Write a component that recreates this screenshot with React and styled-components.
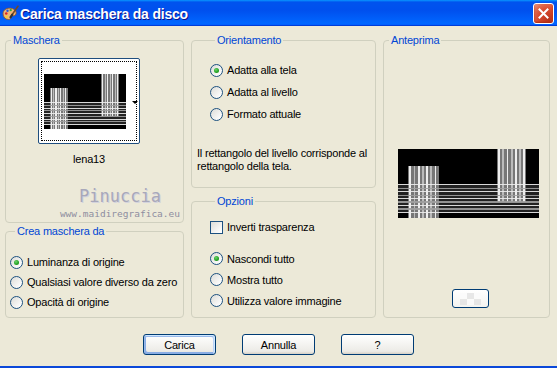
import React from 'react'
import styled, { createGlobalStyle, css } from 'styled-components'

const GlobalStyle = createGlobalStyle`
  html, body {
    margin: 0;
    padding: 0;
    background: #ECE9D8;
  }
  body {
    font-family: "Liberation Sans", Arial, sans-serif;
    font-size: 11px;
    letter-spacing: -0.2px;
    color: #000;
  }
`

const Window = styled.div`
  width: 557px;
  height: 368px;
  box-sizing: border-box;
  display: flex;
  flex-direction: column;
  background: #ECE9D8;
  border-bottom: 2px solid #0B48D9;
  overflow: hidden;
`

const TitleBar = styled.div`
  height: 26px;
  flex: none;
  display: flex;
  align-items: center;
  padding: 0 2px 0 2px;
  gap: 1px;
  background: linear-gradient(180deg, #0997ff 0%, #0053ee 8%, #0050ee 40%, #0066ff 88%, #0066ff 93%, #005bff 95%, #003dd7 96%, #003dd7 100%);
`

const Title = styled.span`
  flex: 1;
  color: #fff;
  font-weight: bold;
  font-size: 14px;
  letter-spacing: -0.2px;
  text-shadow: 1px 1px #0f1089;
  padding-top: 1px;
`

const CloseButton = styled.div`
  width: 19px;
  height: 19px;
  margin-right: 1px;
  border: 1px solid #fff;
  border-radius: 3px;
  display: flex;
  align-items: center;
  justify-content: center;
  background: radial-gradient(circle at 80% 85%, #b8321a 0%, #d84a2e 50%, #e06a4e 75%, #eb9c88 100%);
  box-shadow: inset 0 -1px 2px #a82a12;
`

const Body = styled.div`
  flex: 1;
  display: flex;
  flex-direction: column;
  padding: 8px 0 0 5px;
`

const Columns = styled.div`
  display: flex;
  gap: 7px;
  height: 284px;
`

const Column = styled.div`
  width: ${p => p.$w}px;
  display: flex;
  flex-direction: column;
  gap: ${p => p.$gap || 0}px;
`

const Group = styled.fieldset`
  margin: 0;
  padding: 0;
  min-width: 0;
  box-sizing: border-box;
  border: 1px solid #D0D0BF;
  border-radius: 4px;
  display: flex;
  flex-direction: column;
  ${p => p.$h ? css`height: ${p.$h}px; flex: none;` : css`flex: 1;`}
  ${p => p.$pad && css`padding: ${p.$pad};`}
`

const Legend = styled.legend`
  color: #0046D5;
  padding: 0 2px;
  margin-left: 5px;
  line-height: 13px;
`

const Option = styled.label`
  display: flex;
  align-items: center;
  gap: 4px;
  height: ${p => p.$h || 20}px;
  white-space: nowrap;
`

const Radio = styled.span`
  width: 11px;
  height: 11px;
  flex: none;
  border: 1px solid #1C5180;
  border-radius: 50%;
  background: linear-gradient(135deg, #dcdcd7 0%, #fff 90%);
  display: flex;
  align-items: center;
  justify-content: center;

  &::after {
    content: "";
    display: ${p => (p.$on ? 'block' : 'none')};
    width: 5px;
    height: 5px;
    border-radius: 50%;
    background: radial-gradient(circle at 40% 35%, #6bd36b 0%, #21a121 60%, #1a801a 100%);
  }
`

const Check = styled.span`
  width: 11px;
  height: 11px;
  flex: none;
  border: 1px solid #1C5180;
  background: linear-gradient(135deg, #dcdcd7 0%, #fff 90%);
`

const Note = styled.p`
  margin: 22px 0 0 -13px;
  line-height: 13px;
`

const ThumbButton = styled.div`
  width: 102px;
  height: 86px;
  box-sizing: border-box;
  margin: 11px 0 0 32px;
  border: 1px solid #1F4E7E;
  border-radius: 2px;
  background: #fff;
  display: flex;
  align-items: center;
  padding-left: 5px;
  outline: 1px dotted #000;
  outline-offset: -4px;
`

const Arrow = styled.span`
  width: 0;
  height: 0;
  margin: 2px 0 0 6px;
  border-left: 3px solid transparent;
  border-right: 3px solid transparent;
  border-top: 3px solid #000;
`

const ThumbName = styled.div`
  width: 102px;
  margin: 9px 0 0 32px;
  text-align: center;
  line-height: 13px;
`

const Watermark = styled.div`
  margin-top: 21px;
  padding-right: 3px;
  display: flex;
  flex-direction: column;
  align-items: flex-end;
  font-family: "DejaVu Sans Mono", monospace;
  letter-spacing: 0;
`

const Signature = styled.span`
  font-size: 17px;
  line-height: 18px;
  margin-right: 19px;
  color: #A8A8BA;
  text-shadow: 1px 1px 0 #d4d4de;
`

const Site = styled.span`
  font-size: 9.5px;
  line-height: 12px;
  margin-top: 3px;
  color: #8E8EA0;
`

const Preview = styled.div`
  margin: 102px 0 0 14px;
  line-height: 0;
`

const SwatchButton = styled.div`
  width: 37px;
  height: 19px;
  box-sizing: border-box;
  margin: 71px 0 0 68px;
  border: 1px solid #003C74;
  border-radius: 3px;
  background: linear-gradient(180deg, #fff 0%, #f4f4f0 100%);
  display: flex;
  align-items: center;
  justify-content: center;

  &::after {
    content: "";
    width: 21px;
    height: 12px;
    background: repeating-conic-gradient(#e2e2e2 0 25%, #fbfbfb 0 50%) 0 0 / 14px 12px;
    opacity: 0.8;
  }
`

const ButtonRow = styled.div`
  display: flex;
  justify-content: center;
  gap: 26px;
  margin: 16px 5px 0 0;
`

const Button = styled.button`
  width: 73px;
  height: 21px;
  padding: 0;
  font: inherit;
  letter-spacing: inherit;
  color: #000;
  border: 1px solid #003C74;
  border-radius: 3px;
  background: linear-gradient(180deg, #fff 0%, #ecebe6 86%, #d6d0c5 100%);
  ${p => p.$default && css`
    box-shadow: inset -1px 1px #cee7ff, inset 1px 2px #98b8ea, inset -2px 2px #bcd4f6, inset 1px -1px #89ade4, inset 2px -2px #89ade4;
  `}
`

function AppIcon() {
  return (
    <svg width="17" height="17" viewBox="0 0 16 16">
      <path d="M7 3C3.6 3 1 5.2 1 8.3c0 3 2.3 5.4 5.4 5.4 1.4 0 1.7-.9 1.2-1.8-.5-.9.1-1.8 1.3-1.8h1.6c1.8 0 2.8-1.1 2.8-2.7C13.3 5 10.6 3 7 3z" fill="#EDB677" stroke="#9A5A22" strokeWidth=".8" />
      <circle cx="4" cy="8" r="1.2" fill="#D8262A" />
      <circle cx="5.2" cy="5.4" r="1.1" fill="#2B55D6" />
      <circle cx="8.2" cy="4.8" r="1.1" fill="#2CA53A" />
      <circle cx="4.4" cy="11" r="1.1" fill="#F2D12B" />
      <path d="M15 1.2 9.4 9.3" stroke="#6E4A2A" strokeWidth="1.6" strokeLinecap="round" />
      <path d="M9.6 9 8.2 11.6" stroke="#333" strokeWidth="2" strokeLinecap="round" />
    </svg>
  )
}

function CloseIcon() {
  return (
    <svg width="11" height="11" viewBox="0 0 11 11">
      <path d="M1.5 1.5 9.5 9.5M9.5 1.5 1.5 9.5" stroke="#fff" strokeWidth="2" strokeLinecap="square" />
    </svg>
  )
}

const hLines = [51, 56, 61, 66, 71, 76, 81, 86, 91]
const vLeft = [8, 11, 14, 17, 20, 23, 26]
const vRight = [71, 74, 77, 80, 83, 86, 89]

function MaskArt({ width, height }) {
  return (
    <svg width={width} height={height} viewBox="0 0 100 100" preserveAspectRatio="none" shapeRendering="crispEdges">
      <rect width="100" height="100" fill="#000" />
      <rect x="0" y="50" width="100" height="43" fill="#222" />
      <rect x="7" y="25" width="22" height="75" fill="#777" />
      <rect x="70" y="0" width="21" height="77" fill="#777" />
      {vLeft.map((x, i) => (
        <rect key={'l' + x} x={x} y="25" width="1.3" height="75" fill={i % 2 ? '#bbb' : '#eee'} />
      ))}
      {vRight.map((x, i) => (
        <rect key={'r' + x} x={x} y="0" width="1.3" height="77" fill={i % 2 ? '#bbb' : '#eee'} />
      ))}
      {hLines.map((y, i) => (
        <rect key={'h' + y} x="0" y={y} width="100" height="1.8" fill={i % 2 ? '#a0a0a0' : '#ececec'} opacity="0.9" />
      ))}
    </svg>
  )
}

export default function App() {
  return (
    <Window>
      <GlobalStyle />
      <TitleBar>
        <AppIcon />
        <Title>Carica maschera da disco</Title>
        <CloseButton><CloseIcon /></CloseButton>
      </TitleBar>

      <Body>
        <Columns>
          <Column $w={179} $gap={2}>
            <Group $h={189}>
              <Legend>Maschera</Legend>
              <ThumbButton>
                <MaskArt width={82} height={55} />
                <Arrow />
              </ThumbButton>
              <ThumbName>lena13</ThumbName>
              <Watermark>
                <Signature>Pinuccia</Signature>
                <Site>www.maidiregrafica.eu</Site>
              </Watermark>
            </Group>
            <Group $pad="14px 0 0 4px">
              <Legend>Crea maschera da</Legend>
              <Option><Radio $on />Luminanza di origine</Option>
              <Option><Radio />Qualsiasi valore diverso da zero</Option>
              <Option><Radio />Opacità di origine</Option>
            </Group>
          </Column>

          <Column $w={185} $gap={7}>
            <Group $h={154} $pad="12px 0 0 18px">
              <Legend>Orientamento</Legend>
              <Option $h={22}><Radio $on />Adatta alla tela</Option>
              <Option $h={22}><Radio />Adatta al livello</Option>
              <Option $h={22}><Radio />Formato attuale</Option>
              <Note>
                Il rettangolo del livello corrisponde al<br />rettangolo della tela.
              </Note>
            </Group>
            <Group $pad="9px 0 0 18px">
              <Legend>Opzioni</Legend>
              <Option><Check />Inverti trasparenza</Option>
              <Option $h={21} style={{ marginTop: 11 }}><Radio $on />Nascondi tutto</Option>
              <Option $h={21}><Radio />Mostra tutto</Option>
              <Option $h={21}><Radio />Utilizza valore immagine</Option>
            </Group>
          </Column>

          <Column $w={167}>
            <Group>
              <Legend>Anteprima</Legend>
              <Preview>
                <MaskArt width={141} height={69} />
              </Preview>
              <SwatchButton />
            </Group>
          </Column>
        </Columns>

        <ButtonRow>
          <Button $default>Carica</Button>
          <Button>Annulla</Button>
          <Button>?</Button>
        </ButtonRow>
      </Body>
    </Window>
  )
}
